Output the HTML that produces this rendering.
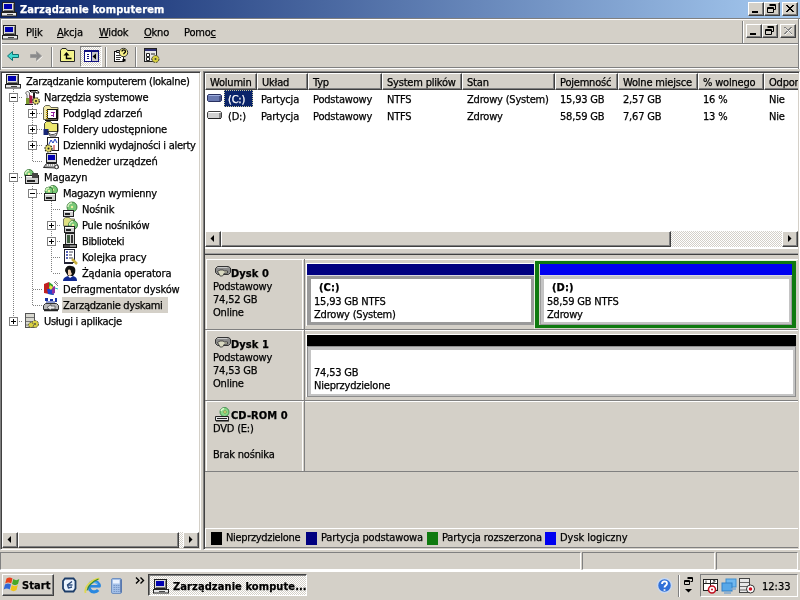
<!DOCTYPE html>
<html lang="pl">
<head>
<meta charset="utf-8">
<title>Zarządzanie komputerem</title>
<style>
*{box-sizing:border-box;margin:0;padding:0}
html,body{width:800px;height:600px;overflow:hidden;background:#d4d0c8}
body{position:relative;font-family:"DejaVu Sans Condensed","Liberation Sans",sans-serif;font-size:11px;color:#000;letter-spacing:-0.2px;line-height:13px;-webkit-text-stroke:0.25px}
.a{position:absolute}
.t{position:absolute;white-space:nowrap}
.b{font-weight:bold;font-size:11px;letter-spacing:0.1px}
.hl{position:absolute;height:1px}
.vl{position:absolute;width:1px}
.btn{position:absolute;background:#d4d0c8;border:1px solid;border-color:#fff #404040 #404040 #fff;box-shadow:inset -1px -1px 0 #808080}
.sunk{position:absolute;border:1px solid;border-color:#808080 #fff #fff #808080}
.sunk2{position:absolute;border:1px solid;border-color:#808080 #fff #fff #808080;box-shadow:inset 1px 1px 0 #404040,inset -1px -1px 0 #d4d0c8}
.dith{background-color:#e9e7e3;background-image:conic-gradient(#fff 25%,#d4d0c8 0 50%,#fff 0 75%,#d4d0c8 0);background-size:2px 2px}
.hdr{position:absolute;top:72px;height:17px;background:#d4d0c8;border:1px solid;border-color:#fff #404040 #404040 #fff;box-shadow:inset -1px -1px 0 #808080;padding:2px 0 0 4px;white-space:nowrap;overflow:hidden}
u{text-decoration:underline}
svg{overflow:visible}
</style>
</head>
<body>
<div id="root" style="position:absolute;left:0;top:0;width:800px;height:600px;will-change:transform">

<div class="a" style="left:0;top:0;width:800px;height:18px;background:linear-gradient(90deg,#0a246a 0%,#a6caf0 100%)"></div>
<svg class="a" style="left:1px;top:1px" width="16" height="16" viewBox="0 0 16 16"><rect x="1.500" y="1.500" width="12" height="9" fill="#dcdcdc" stroke="#222"/><rect x="3" y="3" width="8" height="5" fill="#0000b0"/><path d="M12.500 2.500v8M3 9.500h10" stroke="#777" fill="none"/><rect x="0.500" y="11.500" width="15" height="3.500" fill="#e8e8e8" stroke="#222"/><path d="M6 13.500h6" stroke="#444"/></svg>
<div class="t b" style="left:20px;top:3px;color:#fff">Zarządzanie komputerem</div>
<div class="btn" style="left:748px;top:2px;width:16px;height:14px"></div>
<div class="a" style="left:752px;top:11px;width:6px;height:2px;background:#000;"></div>
<div class="btn" style="left:764px;top:2px;width:16px;height:14px"></div>
<svg class="a" style="left:764px;top:2px" width="16" height="14" viewBox="0 0 16 14"><path d="M5.500 2.500h6v5h-2M5.500 3.500h6" stroke="#000" fill="none"/><path d="M3.500 5.500h6v5h-6zM3.500 6.500h6" stroke="#000" fill="none"/></svg>
<div class="btn" style="left:782px;top:2px;width:16px;height:14px"></div>
<svg class="a" style="left:782px;top:2px" width="16" height="14" viewBox="0 0 16 14"><path d="M4 3l7 7M5 3l7 7M11 3l-7 7M12 3l-7 7" stroke="#000" stroke-width="1" fill="none"/></svg>
<div class="hl" style="left:0px;top:18px;width:800px;background:#808080"></div>
<div class="hl" style="left:0px;top:19px;width:800px;background:#fff"></div>
<div class="vl" style="left:0px;top:19px;height:51px;background:#808080"></div>
<div class="vl" style="left:1px;top:20px;height:49px;background:#fff"></div>
<div class="vl" style="left:798px;top:19px;height:50px;background:#808080"></div>
<div class="vl" style="left:799px;top:19px;height:50px;background:#fff"></div>
<svg class="a" style="left:2px;top:24px" width="16" height="16" viewBox="0 0 16 16"><rect x="1.500" y="1.500" width="12" height="9" fill="#dcdcdc" stroke="#222"/><rect x="3" y="3" width="8" height="5" fill="#0000b0"/><path d="M12.500 2.500v8M3 9.500h10" stroke="#777" fill="none"/><rect x="0.500" y="11.500" width="15" height="3.500" fill="#e8e8e8" stroke="#222"/><path d="M6 13.500h6" stroke="#444"/></svg>
<div class="t" style="left:26px;top:26px;">Pl<u>i</u>k</div>
<div class="t" style="left:57px;top:26px;"><u>A</u>kcja</div>
<div class="t" style="left:99px;top:26px;"><u>W</u>idok</div>
<div class="t" style="left:144px;top:26px;"><u>O</u>kno</div>
<div class="t" style="left:184px;top:26px;">Pomo<u>c</u></div>
<div class="vl" style="left:742px;top:21px;height:22px;background:#808080"></div>
<div class="vl" style="left:743px;top:21px;height:22px;background:#fff"></div>
<div class="btn" style="left:746px;top:24px;width:16px;height:14px"></div>
<div class="a" style="left:750px;top:33px;width:6px;height:2px;background:#000;"></div>
<div class="btn" style="left:762px;top:24px;width:16px;height:14px"></div>
<svg class="a" style="left:762px;top:24px" width="16" height="14" viewBox="0 0 16 14"><path d="M5.500 2.500h6v5h-2M5.500 3.500h6" stroke="#000" fill="none"/><path d="M3.500 5.500h6v5h-6zM3.500 6.500h6" stroke="#000" fill="none"/></svg>
<div class="btn" style="left:780px;top:24px;width:16px;height:14px"></div>
<svg class="a" style="left:780px;top:24px" width="16" height="14" viewBox="0 0 16 14"><path d="M4 3l7 7M5 3l7 7M11 3l-7 7M12 3l-7 7" stroke="#808080" stroke-width="1" fill="none"/><path d="M5 4l7 7M12 4l-7 7" stroke="#fff" stroke-width="1" fill="none" opacity=".8"/></svg>
<div class="hl" style="left:2px;top:43px;width:796px;background:#808080"></div>
<div class="hl" style="left:2px;top:44px;width:796px;background:#fff"></div>
<svg class="a" style="left:7px;top:51px" width="12" height="10" viewBox="0 0 12 10"><path d="M0.500 5l5-4.500v3h6v3h-6v3z" fill="#40d8d0" stroke="#107070"/></svg>
<svg class="a" style="left:30px;top:51px" width="12" height="10" viewBox="0 0 12 10"><path d="M11.500 5l-5-4.500v3h-6v3h6v3z" fill="#8a8a8a" stroke="#9a9a9a"/><path d="M12.500 5.500l-5.500 5" stroke="#fff" opacity=".7"/></svg>
<div class="vl" style="left:51px;top:47px;height:20px;background:#808080"></div>
<div class="vl" style="left:52px;top:47px;height:20px;background:#fff"></div>
<svg class="a" style="left:60px;top:48px" width="16" height="15" viewBox="0 0 16 15"><path d="M0.500 13.500v-11l1.500-2h4l1.500 2h7v11z" fill="#f4f48c" stroke="#222"/><path d="M6.500 6v4.500h5" stroke="#000" fill="none" stroke-width="1.400"/><path d="M3.500 7.500h6l-3-3.500z" fill="#000"/></svg>
<div class="a dith" style="left:80px;top:46px;width:22px;height:21px;border:1px solid;border-color:#808080 #fff #fff #808080"></div>
<svg class="a" style="left:84px;top:50px" width="15" height="12" viewBox="0 0 15 12"><rect x="0.500" y="0.500" width="14" height="11" fill="#fff" stroke="#101080"/><rect x="0" y="0" width="15" height="2" fill="#101080"/><rect x="7" y="2" width="7" height="9" fill="#c8c8c8"/><path d="M7.500 1v10" stroke="#101080"/><path d="M3 4h2v1h-2zM3 6h2v1h-2zM3 8h2v1h-2z" fill="#101080"/><path d="M12 3.500v6l-3.500-3z" fill="#000"/></svg>
<div class="vl" style="left:105px;top:47px;height:20px;background:#808080"></div>
<div class="vl" style="left:106px;top:47px;height:20px;background:#fff"></div>
<svg class="a" style="left:113px;top:48px" width="16" height="15" viewBox="0 0 16 15"><rect x="1.500" y="3.500" width="9" height="10" fill="#fff" stroke="#111"/><path d="M3.500 2.500h4v2h-4z" fill="#ccc" stroke="#111"/><path d="M3 7.500h5M3 9.500h5M3 11.500h4" stroke="#333"/><circle cx="10.500" cy="4.500" r="4.200" fill="#f8f088" stroke="#333"/><path d="M9 3.500c0-2.200 3.500-2.200 3.500 0 0 1.300-1.800 1.200-1.800 2.800" stroke="#000" fill="none" stroke-width="1.300"/><rect x="9.500" y="11" width="3" height="2.500" fill="#000"/></svg>
<div class="vl" style="left:135px;top:47px;height:20px;background:#808080"></div>
<div class="vl" style="left:136px;top:47px;height:20px;background:#fff"></div>
<svg class="a" style="left:144px;top:48px" width="16" height="15" viewBox="0 0 16 15"><rect x="0.500" y="0.500" width="12" height="13" fill="#e8e8e8" stroke="#222"/><rect x="1" y="1" width="11" height="2" fill="#303070"/><path d="M2.500 5.500h3v3h-3zM2.500 9.500h3v3h-3z" fill="#fff" stroke="#222"/><path d="M7 6h4M7 11h2" stroke="#222"/><circle cx="11.500" cy="11" r="3.500" fill="#d8d040" stroke="#443" stroke-dasharray="2 1"/><circle cx="11.500" cy="11" r="1" fill="#443"/></svg>
<div class="hl" style="left:2px;top:67px;width:796px;background:#808080"></div>
<div class="hl" style="left:2px;top:68px;width:796px;background:#fff"></div>
<div class="sunk2" style="left:0;top:71px;width:201px;height:479px;background:#fff"></div>
<div class="a" style="left:13px;top:89px;width:1px;height:232px;background:repeating-linear-gradient(180deg,#808080 0,#808080 1px,transparent 1px,transparent 2px)"></div>
<div class="a" style="left:32px;top:106px;width:1px;height:55px;background:repeating-linear-gradient(180deg,#808080 0,#808080 1px,transparent 1px,transparent 2px)"></div>
<div class="a" style="left:32px;top:186px;width:1px;height:119px;background:repeating-linear-gradient(180deg,#808080 0,#808080 1px,transparent 1px,transparent 2px)"></div>
<div class="a" style="left:51px;top:201px;width:1px;height:72px;background:repeating-linear-gradient(180deg,#808080 0,#808080 1px,transparent 1px,transparent 2px)"></div>
<svg class="a" style="left:5px;top:73px" width="16" height="16" viewBox="0 0 16 16"><rect x="1.500" y="1.500" width="12" height="9" fill="#dcdcdc" stroke="#222"/><rect x="3" y="3" width="8" height="5" fill="#0000b0"/><path d="M12.500 2.500v8M3 9.500h10" stroke="#777" fill="none"/><rect x="0.500" y="11.500" width="15" height="3.500" fill="#e8e8e8" stroke="#222"/><path d="M6 13.500h6" stroke="#444"/></svg>
<div class="t" style="left:26px;top:75px;letter-spacing:-0.31px">Zarządzanie komputerem (lokalne)</div>
<div class="a" style="left:15px;top:97px;height:1px;width:8px;background:repeating-linear-gradient(90deg,#808080 0,#808080 1px,transparent 1px,transparent 2px)"></div>
<div class="a" style="left:9px;top:93px;width:9px;height:9px;border:1px solid #808080;background:#fff"></div>
<div class="a" style="left:11px;top:97px;width:5px;height:1px;background:#000;"></div>
<svg class="a" style="left:24px;top:89px" width="16" height="16" viewBox="0 0 16 16"><path d="M1.500 4l2-2 2 2v10h-2.500v-8z" fill="#f0f0f0" stroke="#444" stroke-width=".8"/><rect x="2" y="9" width="3.500" height="6" fill="#7a9a30"/><path d="M5.500 6l3 1v7.500h-3z" fill="#b01848"/><path d="M5.500 1.500h8l1.500 2.500h-3v-1h-5z" fill="#fff" stroke="#000"/><rect x="9" y="3.500" width="2" height="8" fill="#1a1a1a"/><circle cx="12" cy="12" r="3.300" fill="#e4dc68" stroke="#222" stroke-width="1.200" stroke-dasharray="1.600 1"/><circle cx="12" cy="12" r="1" fill="#222"/><path d="M1 15.500h8" stroke="#222"/></svg>
<div class="t" style="left:44px;top:91px;letter-spacing:-0.21px">Narzędzia systemowe</div>
<div class="a" style="left:33px;top:113px;height:1px;width:9px;background:repeating-linear-gradient(90deg,#808080 0,#808080 1px,transparent 1px,transparent 2px)"></div>
<div class="a" style="left:28px;top:109px;width:9px;height:9px;border:1px solid #808080;background:#fff"></div>
<div class="a" style="left:30px;top:113px;width:5px;height:1px;background:#000;"></div>
<div class="a" style="left:32px;top:111px;width:1px;height:5px;background:#000;"></div>
<svg class="a" style="left:43px;top:105px" width="16" height="16" viewBox="0 0 16 16"><path d="M0.500 14.500v-12l2-2h4l1.500 2h7v12z" fill="#f0e8a8" stroke="#665"/><rect x="4.500" y="4.500" width="9" height="9" fill="#fff" stroke="#111"/><path d="M4 5v9" stroke="#a08000" stroke-width="2" stroke-dasharray="1 1"/><path d="M8 7.500h4M10.500 7v5M8 10.500h2" stroke="#9020a0" fill="none"/><path d="M14.500 4v11M2 15.500h13" stroke="#111"/></svg>
<div class="t" style="left:63px;top:107px;letter-spacing:-0.15px">Podgląd zdarzeń</div>
<div class="a" style="left:33px;top:129px;height:1px;width:9px;background:repeating-linear-gradient(90deg,#808080 0,#808080 1px,transparent 1px,transparent 2px)"></div>
<div class="a" style="left:28px;top:125px;width:9px;height:9px;border:1px solid #808080;background:#fff"></div>
<div class="a" style="left:30px;top:129px;width:5px;height:1px;background:#000;"></div>
<div class="a" style="left:32px;top:127px;width:1px;height:5px;background:#000;"></div>
<svg class="a" style="left:43px;top:121px" width="16" height="16" viewBox="0 0 16 16"><path d="M1.500 10.500v-8l2-2h4l1.500 2h6v8z" fill="#ece870" stroke="#443"/><path d="M14.500 3v8" stroke="#111"/><rect x="0.500" y="8" width="5" height="6" fill="#182878"/><path d="M4.500 10c2 4.500 6 4.500 10 1.500l-1.500 3.500h-6z" fill="#f8f8f8" stroke="#222" stroke-width=".8"/></svg>
<div class="t" style="left:63px;top:123px;letter-spacing:-0.15px">Foldery udostępnione</div>
<div class="a" style="left:33px;top:145px;height:1px;width:9px;background:repeating-linear-gradient(90deg,#808080 0,#808080 1px,transparent 1px,transparent 2px)"></div>
<div class="a" style="left:28px;top:141px;width:9px;height:9px;border:1px solid #808080;background:#fff"></div>
<div class="a" style="left:30px;top:145px;width:5px;height:1px;background:#000;"></div>
<div class="a" style="left:32px;top:143px;width:1px;height:5px;background:#000;"></div>
<svg class="a" style="left:43px;top:137px" width="16" height="16" viewBox="0 0 16 16"><rect x="4.5" y="0.5" width="11" height="13" fill="#fff" stroke="#222"/><path d="M6 7l2-4 2 3 2-4 2 4" stroke="#2040c0" fill="none"/><path d="M11 8v5" stroke="#c02020"/><circle cx="5.500" cy="11.500" r="3.500" fill="#e4dc68" stroke="#222" stroke-width="1.200" stroke-dasharray="1.600 1"/><circle cx="5.500" cy="11.500" r="1" fill="#222"/></svg>
<div class="t" style="left:63px;top:139px;letter-spacing:-0.29px">Dzienniki wydajności i alerty</div>
<div class="a" style="left:33px;top:161px;height:1px;width:9px;background:repeating-linear-gradient(90deg,#808080 0,#808080 1px,transparent 1px,transparent 2px)"></div>
<svg class="a" style="left:43px;top:153px" width="16" height="16" viewBox="0 0 16 16"><rect x="3.5" y="0.5" width="10" height="9" fill="#d8d8d8" stroke="#222"/><rect x="5" y="2" width="7" height="5" fill="#0000b0"/><path d="M0.5 14.5l3-4h10l2 3v1.500z" fill="#e8e8e8" stroke="#222"/><path d="M3 12h9M2.500 13.500h9" stroke="#555" stroke-dasharray="1 1"/><circle cx="13.500" cy="14" r="1.800" fill="#fff" stroke="#333"/></svg>
<div class="t" style="left:63px;top:155px;letter-spacing:-0.16px">Menedżer urządzeń</div>
<div class="a" style="left:15px;top:177px;height:1px;width:8px;background:repeating-linear-gradient(90deg,#808080 0,#808080 1px,transparent 1px,transparent 2px)"></div>
<div class="a" style="left:9px;top:173px;width:9px;height:9px;border:1px solid #808080;background:#fff"></div>
<div class="a" style="left:11px;top:177px;width:5px;height:1px;background:#000;"></div>
<svg class="a" style="left:24px;top:169px" width="16" height="16" viewBox="0 0 16 16"><circle cx="5" cy="5" r="4.5" fill="#78c878" stroke="#2a6a2a" stroke-width=".8"/><path d="M1.5 5a3.5 3.5 0 0 1 3.5 -3.5" stroke="#d8f0c0" fill="none" stroke-width="1.5"/><circle cx="5" cy="5" r="1.2" fill="#f0f0a0"/><rect x="1.5" y="6.5" width="13" height="8" fill="#d0d0d0" stroke="#222"/><rect x="3" y="11" width="8" height="2" fill="#222"/><path d="M2 7.5h12" stroke="#fff"/><rect x="8" y="4" width="6" height="5" fill="#444"/></svg>
<div class="t" style="left:44px;top:171px;letter-spacing:-0.11px">Magazyn</div>
<div class="a" style="left:33px;top:193px;height:1px;width:9px;background:repeating-linear-gradient(90deg,#808080 0,#808080 1px,transparent 1px,transparent 2px)"></div>
<div class="a" style="left:28px;top:189px;width:9px;height:9px;border:1px solid #808080;background:#fff"></div>
<div class="a" style="left:30px;top:193px;width:5px;height:1px;background:#000;"></div>
<svg class="a" style="left:43px;top:185px" width="16" height="16" viewBox="0 0 16 16"><circle cx="10" cy="5" r="4.5" fill="#78c878" stroke="#2a6a2a" stroke-width=".8"/><path d="M6.5 5a3.5 3.5 0 0 1 3.5 -3.5" stroke="#d8f0c0" fill="none" stroke-width="1.5"/><circle cx="10" cy="5" r="1.2" fill="#f0f0a0"/><circle cx="6" cy="6" r="4" fill="#78c878" stroke="#2a6a2a" stroke-width=".8"/><path d="M3 6a3 3 0 0 1 3 -3" stroke="#d8f0c0" fill="none" stroke-width="1.5"/><circle cx="6" cy="6" r="1.2" fill="#f0f0a0"/><rect x="1.5" y="8.5" width="11" height="7" fill="#d0d0d0" stroke="#222"/><rect x="3" y="12" width="6" height="2" fill="#222"/><path d="M2 9.5h10" stroke="#fff"/></svg>
<div class="t" style="left:63px;top:187px;letter-spacing:-0.28px">Magazyn wymienny</div>
<div class="a" style="left:53px;top:209px;height:1px;width:8px;background:repeating-linear-gradient(90deg,#808080 0,#808080 1px,transparent 1px,transparent 2px)"></div>
<svg class="a" style="left:62px;top:201px" width="16" height="16" viewBox="0 0 16 16"><circle cx="10" cy="6" r="5" fill="#78c878" stroke="#2a6a2a" stroke-width=".8"/><path d="M6 6a4 4 0 0 1 4 -4" stroke="#d8f0c0" fill="none" stroke-width="1.5"/><circle cx="10" cy="6" r="1.2" fill="#f0f0a0"/><rect x="1.5" y="9.5" width="10" height="6" fill="#d0d0d0" stroke="#222"/><rect x="3" y="12" width="5" height="2" fill="#222"/><path d="M2 10.5h9" stroke="#fff"/></svg>
<div class="t" style="left:82px;top:203px;letter-spacing:-0.2px">Nośnik</div>
<div class="a" style="left:53px;top:225px;height:1px;width:8px;background:repeating-linear-gradient(90deg,#808080 0,#808080 1px,transparent 1px,transparent 2px)"></div>
<div class="a" style="left:47px;top:221px;width:9px;height:9px;border:1px solid #808080;background:#fff"></div>
<div class="a" style="left:49px;top:225px;width:5px;height:1px;background:#000;"></div>
<div class="a" style="left:51px;top:223px;width:1px;height:5px;background:#000;"></div>
<svg class="a" style="left:62px;top:217px" width="16" height="16" viewBox="0 0 16 16"><path d="M1.500 9v-7l2-1.500h4l1 1.500h4v7z" fill="#e0e080" stroke="#776"/><circle cx="11" cy="8" r="4.5" fill="#78c878" stroke="#2a6a2a" stroke-width=".8"/><path d="M7.5 8a3.5 3.5 0 0 1 3.5 -3.5" stroke="#d8f0c0" fill="none" stroke-width="1.5"/><circle cx="11" cy="8" r="1.2" fill="#f0f0a0"/><rect x="2.5" y="9.5" width="10" height="6" fill="#d0d0d0" stroke="#222"/><rect x="4" y="12" width="5" height="2" fill="#222"/><path d="M3 10.5h9" stroke="#fff"/></svg>
<div class="t" style="left:82px;top:219px;letter-spacing:-0.21px">Pule nośników</div>
<div class="a" style="left:53px;top:241px;height:1px;width:8px;background:repeating-linear-gradient(90deg,#808080 0,#808080 1px,transparent 1px,transparent 2px)"></div>
<div class="a" style="left:47px;top:237px;width:9px;height:9px;border:1px solid #808080;background:#fff"></div>
<div class="a" style="left:49px;top:241px;width:5px;height:1px;background:#000;"></div>
<div class="a" style="left:51px;top:239px;width:1px;height:5px;background:#000;"></div>
<svg class="a" style="left:62px;top:233px" width="16" height="16" viewBox="0 0 16 16"><rect x="3.500" y="0.500" width="9" height="11" fill="#d8d8d8" stroke="#222"/><rect x="5" y="2" width="3" height="8" fill="#406040"/><rect x="9" y="2" width="2" height="8" fill="#333"/><rect x="1.500" y="11.500" width="13" height="3" fill="#444" stroke="#111"/><path d="M8 13h6" stroke="#ccc"/></svg>
<div class="t" style="left:82px;top:235px;letter-spacing:-0.38px">Biblioteki</div>
<div class="a" style="left:53px;top:257px;height:1px;width:8px;background:repeating-linear-gradient(90deg,#808080 0,#808080 1px,transparent 1px,transparent 2px)"></div>
<svg class="a" style="left:62px;top:249px" width="16" height="16" viewBox="0 0 16 16"><rect x="2.500" y="0.500" width="10" height="13" fill="#fff" stroke="#223"/><path d="M4 3h2M4 6h2M4 9h2" stroke="#2030a0" stroke-width="1.500"/><path d="M7 3h4M7 6h3M7 9h4" stroke="#445"/><path d="M10 10l5 5" stroke="#c8b040" stroke-width="2.500"/><path d="M2 14.500h9" stroke="#223"/></svg>
<div class="t" style="left:82px;top:251px;letter-spacing:-0.12px">Kolejka pracy</div>
<div class="a" style="left:53px;top:273px;height:1px;width:8px;background:repeating-linear-gradient(90deg,#808080 0,#808080 1px,transparent 1px,transparent 2px)"></div>
<svg class="a" style="left:62px;top:265px" width="16" height="16" viewBox="0 0 16 16"><path d="M3 6c0-4 3-6 6-5 4 0 5 3 4 7l-2 3H6z" fill="#111"/><path d="M6 5c2-1 3 0 3 2l1 2-2 2-2-1z" fill="#f0d0b0"/><path d="M1 16c0-3 2-4 5-5l2 2 3-2c3 1 4 2 4 5z" fill="#102890"/></svg>
<div class="t" style="left:82px;top:267px;letter-spacing:-0.16px">Żądania operatora</div>
<div class="a" style="left:33px;top:289px;height:1px;width:9px;background:repeating-linear-gradient(90deg,#808080 0,#808080 1px,transparent 1px,transparent 2px)"></div>
<svg class="a" style="left:43px;top:281px" width="16" height="16" viewBox="0 0 16 16"><path d="M1 3l5-2v12l-5-1z" fill="#c02020"/><path d="M6 1l4 3v10l-4-1z" fill="#30a030"/><path d="M4 8l6 0 1 6-6-1z" fill="#2040d0"/><path d="M9 6l3-1v7l-3 1z" fill="#9030a0"/><path d="M7 4l3 2-2 3-2-2z" fill="#e8e040"/><path d="M11 1l4 4M12 0l3 3" stroke="#888"/><path d="M12 7l3 1" stroke="#20c0c0"/></svg>
<div class="t" style="left:63px;top:283px;letter-spacing:-0.14px">Defragmentator dysków</div>
<div class="a" style="left:33px;top:305px;height:1px;width:9px;background:repeating-linear-gradient(90deg,#808080 0,#808080 1px,transparent 1px,transparent 2px)"></div>
<svg class="a" style="left:43px;top:297px" width="16" height="16" viewBox="0 0 16 16"><path d="M2 1h3v3H2zM7 2h3v2H7zM12 1h2v4h-2z" fill="#1830a0"/><path d="M3 5h9" stroke="#1830a0"/><path d="M0.500 8.500l2-2h11l2 2v4h-15z" fill="#b8b8b8" stroke="#333"/><path d="M4 10.500l4 3v-1.500h4v-3H8v-1.500z" fill="#e8e8e8" stroke="#444" stroke-width=".7"/><path d="M1 13.500h14" stroke="#222" stroke-width="1.500"/></svg>
<div class="a" style="left:62px;top:297px;width:106px;height:16px;background:#d4d0c8;"></div>
<div class="t" style="left:63px;top:299px;letter-spacing:-0.3px">Zarządzanie dyskami</div>
<div class="a" style="left:15px;top:321px;height:1px;width:8px;background:repeating-linear-gradient(90deg,#808080 0,#808080 1px,transparent 1px,transparent 2px)"></div>
<div class="a" style="left:9px;top:317px;width:9px;height:9px;border:1px solid #808080;background:#fff"></div>
<div class="a" style="left:11px;top:321px;width:5px;height:1px;background:#000;"></div>
<div class="a" style="left:13px;top:319px;width:1px;height:5px;background:#000;"></div>
<svg class="a" style="left:24px;top:313px" width="16" height="16" viewBox="0 0 16 16"><rect x="1.500" y="0.500" width="9" height="14" fill="#d8d8d0" stroke="#555"/><path d="M2 4.500h8M2 8.500h8M2 12h8" stroke="#777"/><circle cx="11" cy="11" r="3.500" fill="#d8d040" stroke="#554" stroke-dasharray="2 1"/><circle cx="7" cy="12" r="2.500" fill="#d8d040" stroke="#554" stroke-dasharray="1.500 1"/><circle cx="11" cy="11" r="1" fill="#554"/></svg>
<div class="t" style="left:44px;top:315px;letter-spacing:-0.31px">Usługi i aplikacje</div>
<div class="a dith" style="left:2px;top:532px;width:197px;height:16px"></div>
<div class="btn" style="left:2px;top:532px;width:16px;height:16px"></div>
<svg class="a" style="left:2px;top:532px" width="16" height="16" viewBox="0 0 16 16"><path d="M9 4v7l-3.500-3.500z" fill="#000"/></svg>
<div class="btn" style="left:183px;top:532px;width:16px;height:16px"></div>
<svg class="a" style="left:183px;top:532px" width="16" height="16" viewBox="0 0 16 16"><path d="M6 4v7l3.500-3.500z" fill="#000"/></svg>
<div class="btn" style="left:18px;top:532px;width:161px;height:16px"></div>
<div class="sunk2" style="left:203px;top:71px;width:597px;height:479px;background:#d4d0c8"></div>
<div class="a" style="left:205px;top:73px;width:593px;height:174px;background:#fff;"></div>
<div class="hl" style="left:205px;top:247px;width:593px;background:#fff"></div>
<div class="hl" style="left:205px;top:248px;width:593px;background:#fff"></div>
<div class="hl" style="left:205px;top:253px;width:593px;background:#a0a0a0"></div>
<div class="hl" style="left:205px;top:254px;width:593px;background:#404040"></div>
<div class="a" style="left:205px;top:73px;width:593px;height:17px;background:#d4d0c8;"></div>
<div class="a" style="left:205px;top:73px;width:593px;height:17px;overflow:hidden">
<div class="hdr" style="left:0px;top:0;width:52px">Wolumin</div>
<div class="hdr" style="left:52px;top:0;width:51px">Układ</div>
<div class="hdr" style="left:103px;top:0;width:74px">Typ</div>
<div class="hdr" style="left:177px;top:0;width:80px">System plików</div>
<div class="hdr" style="left:257px;top:0;width:93px">Stan</div>
<div class="hdr" style="left:350px;top:0;width:63px">Pojemność</div>
<div class="hdr" style="left:413px;top:0;width:80px">Wolne miejsce</div>
<div class="hdr" style="left:493px;top:0;width:66px">% wolnego</div>
<div class="hdr" style="left:559px;top:0;width:96px">Odporność na uszkodzenia</div>
</div>
<svg class="a" style="left:207px;top:92px" width="16" height="12" viewBox="0 0 16 12"><path d="M1.500 2.500h12l1 1v5l-1 1h-12l-1-1v-5z" fill="#6878b0" stroke="#283060"/><path d="M2 3.500h11" stroke="#a0b0e0"/><path d="M13 4v5" stroke="#283060"/></svg>
<div class="a" style="left:224px;top:90px;width:29px;height:17px;background:#0a246a;outline:1px dotted #c8c8a0;outline-offset:-1px"></div>
<div class="t" style="left:228px;top:93px;color:#fff">(C:)</div>
<div class="t" style="left:261px;top:93px;">Partycja</div>
<div class="t" style="left:313px;top:93px;">Podstawowy</div>
<div class="t" style="left:387px;top:93px;">NTFS</div>
<div class="t" style="left:467px;top:93px;">Zdrowy (System)</div>
<div class="t" style="left:560px;top:93px;">15,93 GB</div>
<div class="t" style="left:623px;top:93px;">2,57 GB</div>
<div class="t" style="left:703px;top:93px;">16 %</div>
<div class="t" style="left:769px;top:93px;">Nie</div>
<svg class="a" style="left:207px;top:109px" width="16" height="12" viewBox="0 0 16 12"><path d="M1.500 2.500h12l1 1v5l-1 1h-12l-1-1v-5z" fill="#d0d0d0" stroke="#404040"/><path d="M2 3.500h11" stroke="#fff"/><path d="M13 4v5" stroke="#404040"/><path d="M1 9.500h13" stroke="#222"/></svg>
<div class="t" style="left:228px;top:110px;">(D:)</div>
<div class="t" style="left:261px;top:110px;">Partycja</div>
<div class="t" style="left:313px;top:110px;">Podstawowy</div>
<div class="t" style="left:387px;top:110px;">NTFS</div>
<div class="t" style="left:467px;top:110px;">Zdrowy</div>
<div class="t" style="left:560px;top:110px;">58,59 GB</div>
<div class="t" style="left:623px;top:110px;">7,67 GB</div>
<div class="t" style="left:703px;top:110px;">13 %</div>
<div class="t" style="left:769px;top:110px;">Nie</div>
<div class="a dith" style="left:205px;top:231px;width:593px;height:16px"></div>
<div class="btn" style="left:205px;top:231px;width:16px;height:16px"></div>
<svg class="a" style="left:205px;top:231px" width="16" height="16" viewBox="0 0 16 16"><path d="M9 4v7l-3.500-3.500z" fill="#000"/></svg>
<div class="btn" style="left:782px;top:231px;width:16px;height:16px"></div>
<svg class="a" style="left:782px;top:231px" width="16" height="16" viewBox="0 0 16 16"><path d="M6 4v7l3.500-3.500z" fill="#000"/></svg>
<div class="btn" style="left:221px;top:231px;width:450px;height:16px"></div>
<div class="hl" style="left:206px;top:259px;width:592px;background:#fff"></div>
<div class="vl" style="left:206px;top:259px;height:70px;background:#fff"></div>
<div class="vl" style="left:302px;top:259px;height:70px;background:#fff"></div>
<div class="vl" style="left:304px;top:259px;height:71px;background:#808080"></div>
<div class="hl" style="left:205px;top:329px;width:593px;background:#808080"></div>
<svg class="a" style="left:215px;top:265px" width="16" height="14" viewBox="0 0 16 14"><path d="M0.500 3.500l2-2h11l2 1.500v4.500l-2 2h-11l-2-2z" fill="#8a8a8a" stroke="#333"/><path d="M2.500 2.500h10" stroke="#c8c8c8"/><path d="M2.500 6.500l2.500-1.500h3l1.500 1h3v2h-3l-2 3h-2.500l-1-2z" fill="#d8d8c0" stroke="#333" stroke-width=".8"/></svg>
<div class="t b" style="left:231px;top:267px;">Dysk 0</div>
<div class="t" style="left:213px;top:280px;">Podstawowy</div>
<div class="t" style="left:213px;top:293px;">74,52 GB</div>
<div class="t" style="left:213px;top:306px;">Online</div>
<div class="hl" style="left:206px;top:330px;width:592px;background:#fff"></div>
<div class="vl" style="left:206px;top:330px;height:70px;background:#fff"></div>
<div class="vl" style="left:302px;top:330px;height:70px;background:#fff"></div>
<div class="vl" style="left:304px;top:330px;height:71px;background:#808080"></div>
<div class="hl" style="left:205px;top:400px;width:593px;background:#808080"></div>
<svg class="a" style="left:215px;top:336px" width="16" height="14" viewBox="0 0 16 14"><path d="M0.500 3.500l2-2h11l2 1.500v4.500l-2 2h-11l-2-2z" fill="#8a8a8a" stroke="#333"/><path d="M2.500 2.500h10" stroke="#c8c8c8"/><path d="M2.500 6.500l2.500-1.500h3l1.500 1h3v2h-3l-2 3h-2.500l-1-2z" fill="#d8d8c0" stroke="#333" stroke-width=".8"/></svg>
<div class="t b" style="left:231px;top:338px;">Dysk 1</div>
<div class="t" style="left:213px;top:351px;">Podstawowy</div>
<div class="t" style="left:213px;top:364px;">74,53 GB</div>
<div class="t" style="left:213px;top:377px;">Online</div>
<div class="hl" style="left:206px;top:401px;width:592px;background:#fff"></div>
<div class="vl" style="left:206px;top:401px;height:70px;background:#fff"></div>
<div class="vl" style="left:302px;top:401px;height:70px;background:#fff"></div>
<div class="vl" style="left:304px;top:401px;height:71px;background:#808080"></div>
<div class="hl" style="left:205px;top:471px;width:593px;background:#808080"></div>
<svg class="a" style="left:215px;top:407px" width="16" height="14" viewBox="0 0 16 14"><circle cx="9.500" cy="5" r="4.500" fill="#88d888" stroke="#2a7a3a" stroke-width=".8"/><circle cx="10" cy="5" r="1.300" fill="#f4f490" stroke="#586020" stroke-width=".5"/><path d="M6 4a4 4 0 0 1 3-2.500" stroke="#e0f8d0" fill="none" stroke-width="1.500"/><path d="M0.500 9.500h13v4h-13z" fill="#e8e8e8" stroke="#222"/><path d="M2 11.500h10" stroke="#222"/><path d="M1 14h13" stroke="#111"/></svg>
<div class="t b" style="left:231px;top:409px;">CD-ROM 0</div>
<div class="t" style="left:213px;top:422px;">DVD (E:)</div>
<div class="t" style="left:213px;top:448px;">Brak nośnika</div>
<div class="vl" style="left:306px;top:263px;height:63px;background:#fff"></div>
<div class="hl" style="left:306px;top:263px;width:228px;background:#fff"></div>
<div class="a" style="left:307px;top:264px;width:227px;height:11px;background:#000080;"></div>
<div class="a" style="left:307px;top:275px;width:227px;height:50px;background:#fff;border:solid #9a9a9a;border-width:4px 3px 3px 4px;"></div>
<div class="a" style="left:307px;top:275px;width:227px;height:1px;background:#d8d8e0;"></div>
<div class="t b" style="left:319px;top:281px;">(C:)</div>
<div class="t" style="left:314px;top:295px;">15,93 GB NTFS</div>
<div class="t" style="left:314px;top:308px;">Zdrowy (System)</div>
<div class="a" style="left:535px;top:261px;width:261px;height:67px;border:3px solid #0f7a0f;border-left-width:4px;border-right-width:4px"></div>
<div class="vl" style="left:534px;top:260px;height:69px;background:#e8f4e0"></div>
<div class="hl" style="left:534px;top:260px;width:263px;background:#e8f4e0"></div>
<div class="a" style="left:540px;top:264px;width:252px;height:11px;background:#0000f0;"></div>
<div class="a" style="left:540px;top:275px;width:252px;height:50px;background:#fff;border:solid #c4c4c4;border-width:4px 3px 3px 4px;outline:1px solid #9c9c9c;outline-offset:-1px"></div>
<div class="a" style="left:540px;top:275px;width:252px;height:1px;background:#d8d8e0;"></div>
<div class="t b" style="left:552px;top:281px;">(D:)</div>
<div class="t" style="left:547px;top:295px;">58,59 GB NTFS</div>
<div class="t" style="left:547px;top:308px;">Zdrowy</div>
<div class="vl" style="left:306px;top:334px;height:63px;background:#fff"></div>
<div class="hl" style="left:306px;top:334px;width:491px;background:#fff"></div>
<div class="a" style="left:307px;top:335px;width:489px;height:11px;background:#000;"></div>
<div class="a" style="left:307px;top:346px;width:489px;height:51px;background:#fff;border:solid #c4c4c4;border-width:4px 3px 3px 4px;outline:1px solid #8c8c8c;outline-offset:-1px"></div>
<div class="a" style="left:307px;top:346px;width:489px;height:1px;background:#909090;"></div>
<div class="t" style="left:314px;top:366px;">74,53 GB</div>
<div class="t" style="left:314px;top:379px;">Nieprzydzielone</div>
<div class="hl" style="left:205px;top:528px;width:593px;background:#fff"></div>
<div class="vl" style="left:205px;top:528px;height:19px;background:#fff"></div>
<div class="hl" style="left:205px;top:547px;width:593px;background:#808080"></div>
<div class="a" style="left:211px;top:532px;width:11px;height:13px;background:#000;"></div>
<div class="t" style="left:226px;top:531px;letter-spacing:-0.33px">Nieprzydzielone</div>
<div class="a" style="left:306px;top:532px;width:11px;height:13px;background:#000080;"></div>
<div class="t" style="left:321px;top:531px;letter-spacing:-0.15px">Partycja podstawowa</div>
<div class="a" style="left:427px;top:532px;width:11px;height:13px;background:#0f7a0f;"></div>
<div class="t" style="left:442px;top:531px;letter-spacing:-0.1px">Partycja rozszerzona</div>
<div class="a" style="left:545px;top:532px;width:11px;height:13px;background:#0000f0;"></div>
<div class="t" style="left:560px;top:531px;letter-spacing:-0.05px">Dysk logiczny</div>
<div class="sunk" style="left:0px;top:552px;width:581px;height:18px"></div>
<div class="sunk" style="left:582px;top:552px;width:133px;height:18px"></div>
<div class="sunk" style="left:716px;top:552px;width:82px;height:18px"></div>
<div class="hl" style="left:0px;top:570px;width:800px;background:#fff"></div>
<div class="hl" style="left:0px;top:571px;width:800px;background:#fff"></div>
<div class="btn" style="left:2px;top:574px;width:52px;height:22px"></div>
<svg class="a" style="left:5px;top:577px" width="15" height="14" viewBox="0 0 15 14"><path d="M1.500 1.500c2-1.500 4-1.500 6 0l-1.300 5c-2-1.500-4-1.500-6 0z" fill="#e8401c"/><path d="M8.300 2c2 1.500 4 1.500 6 0l-1.300 5c-2 1.500-4 1.500-6 0z" fill="#48a828"/><path d="M0 7.500c2-1.500 4-1.500 6 0l-1.300 5c-2-1.500-4-1.500-6 0z" fill="#3068d8"/><path d="M6.800 8c2 1.500 4 1.500 6 0l-1.300 5c-2 1.500-4 1.500-6 0z" fill="#f0c418"/></svg>
<div class="t b" style="left:22px;top:579px;">Start</div>
<svg class="a" style="left:62px;top:577px" width="15" height="16" viewBox="0 0 15 16"><path d="M3 1.500h8.500l2 2.500v7.500l-2 3h-8.500l-2-3v-7.500z" fill="#eaf4ff" stroke="#1c3c68" stroke-width="1.800"/><path d="M10 4.500l-4.500 3.500 1 3 3.500-1" stroke="#28487a" fill="none" stroke-width="1.400"/><path d="M5.500 8h5" stroke="#28487a" stroke-width="1.400"/></svg>
<svg class="a" style="left:84px;top:576px" width="18" height="18" viewBox="0 0 18 18"><path d="M15.400 10.800A5.200 5.200 0 1 0 14.200 14" stroke="#2a88e0" stroke-width="3.200" fill="none"/><path d="M5.500 10.300h10.800" stroke="#2a88e0" stroke-width="2.600"/><path d="M6 8.500a4.500 4.500 0 0 1 8 0" stroke="#58b0f4" stroke-width="1.200" fill="none"/><path d="M1.500 17c-1.500-6 5-13 14-14.500" stroke="#e0d850" stroke-width="1.800" fill="none"/><path d="M3 14.500c1-4.500 5.500-9.500 11.500-11.500" stroke="#3c8c2c" stroke-width="1.100" fill="none"/></svg>
<svg class="a" style="left:110px;top:578px" width="13" height="16" viewBox="0 0 13 16"><rect x="1.500" y="0.500" width="10" height="15" rx="1.500" fill="#a4c0e8" stroke="#7090c0"/><path d="M11 1.500v13" stroke="#5070a8" stroke-width="1.500"/><rect x="3" y="2" width="6.500" height="3.500" fill="#eaf2ff"/><path d="M3.500 7.500h6M3.500 9.500h6M3.500 11.500h6M3.500 13.500h6" stroke="#7898c8" stroke-dasharray="1.500 .800"/></svg>
<svg class="a" style="left:135px;top:577px" width="10" height="7" viewBox="0 0 10 7"><path d="M1 0.500l3 3-3 3M5.500 0.500l3 3-3 3" stroke="#000" fill="none" stroke-width="1.400"/></svg>
<div class="a dith" style="left:148px;top:574px;width:159px;height:22px;border:1px solid;border-color:#404040 #fff #fff #404040;box-shadow:inset 1px 1px 0 #808080"></div>
<svg class="a" style="left:153px;top:578px" width="16" height="16" viewBox="0 0 16 16"><rect x="1.500" y="1.500" width="12" height="9" fill="#dcdcdc" stroke="#222"/><rect x="3" y="3" width="8" height="5" fill="#0000b0"/><path d="M12.500 2.500v8M3 9.500h10" stroke="#777" fill="none"/><rect x="0.500" y="11.500" width="15" height="3.500" fill="#e8e8e8" stroke="#222"/><path d="M6 13.500h6" stroke="#444"/></svg>
<div class="t b" style="left:173px;top:580px;">Zarządzanie kompute...</div>
<svg class="a" style="left:657px;top:578px" width="15" height="15" viewBox="0 0 15 15"><circle cx="7.500" cy="7.500" r="7" fill="#3070d8" stroke="#c8d8f0" stroke-width="1.500"/><path d="M5 6c0-3.500 5-3.500 5-.5 0 2-2.500 2-2.500 4M7.500 11.200v1.500" stroke="#fff" fill="none" stroke-width="1.800"/></svg>
<div class="vl" style="left:678px;top:575px;height:22px;background:#808080"></div>
<div class="vl" style="left:679px;top:575px;height:22px;background:#fff"></div>
<svg class="a" style="left:684px;top:577px" width="9" height="8" viewBox="0 0 9 8"><path d="M3.500 0.500h5v4h-2M3.500 1.500h5" stroke="#000" fill="none"/><path d="M0.500 3.500h5v4h-5zM0.500 4.500h5" stroke="#000" fill="none"/></svg>
<svg class="a" style="left:685px;top:589px" width="7" height="4" viewBox="0 0 7 4"><path d="M0 0h7l-3.500 3.500z" fill="#000"/></svg>
<div class="sunk" style="left:700px;top:574px;width:98px;height:23px"></div>
<svg class="a" style="left:703px;top:578px" width="16" height="16" viewBox="0 0 16 16"><rect x="0.500" y="1.500" width="14" height="11" fill="#fff" stroke="#222"/><path d="M7.500 1.500v11M0.500 5.500h14" stroke="#222"/><path d="M3 2.500v3M10 2.500h2v1.500h-2v1.500h2" stroke="#222" fill="none" stroke-width=".8"/><circle cx="9" cy="11.500" r="3.500" fill="#fff" stroke="#c01020" stroke-width="1.600"/><circle cx="9" cy="11.500" r="1" fill="#c01020"/></svg>
<svg class="a" style="left:721px;top:578px" width="16" height="16" viewBox="0 0 16 16"><rect x="5" y="1" width="10" height="8" fill="#70b8f0" stroke="#4090d0"/><rect x="1" y="5" width="10" height="8" fill="#58a8e8" stroke="#3080c8"/><path d="M3 15h7M10 11h5" stroke="#80a8d0" stroke-width="1.500"/></svg>
<svg class="a" style="left:739px;top:578px" width="17" height="16" viewBox="0 0 17 16"><rect x="0.500" y="0.500" width="10" height="14" fill="#e8e8e8" stroke="#444"/><path d="M1 4.500h9M1 8.500h9M1 12h9" stroke="#666"/><circle cx="11.500" cy="11" r="4" fill="#fff" stroke="#333"/><circle cx="11.500" cy="11" r="1.800" fill="#d01020"/></svg>
<div class="t" style="left:762px;top:580px;letter-spacing:0">12:33</div>
</div>
</body>
</html>
